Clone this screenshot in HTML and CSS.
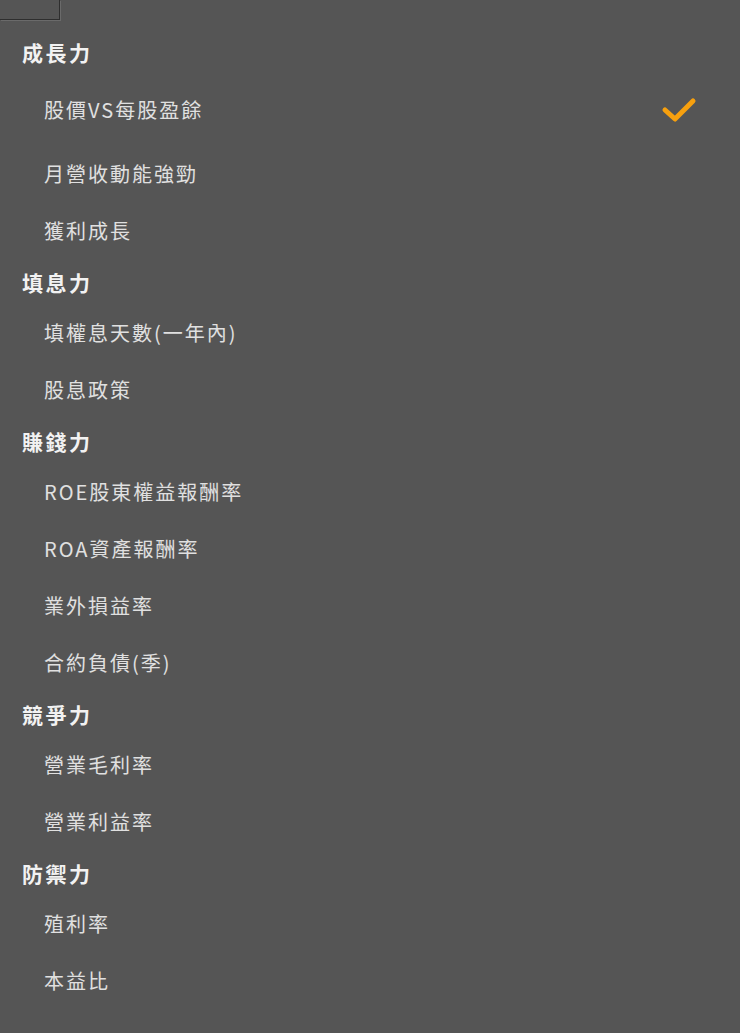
FILE: index.html
```html
<!DOCTYPE html>
<html lang="zh-Hant">
<head>
<meta charset="utf-8">
<title>選股條件</title>
<link rel="stylesheet" href="styles.css">
</head>
<body>
<div class="topbox"></div>
<div class="list">
  <div class="group-title">成長力</div>
  <div class="item item-checked">
    <span class="label">股價VS每股盈餘</span>
    <svg class="check" width="38" height="28" viewBox="0 0 38 28"><polyline points="5,14 15,23 33,5" fill="none" stroke="#f7a00e" stroke-width="5" stroke-linecap="round" stroke-linejoin="round"/></svg>
  </div>
  <div class="item"><span class="label">月營收動能強勁</span></div>
  <div class="item"><span class="label">獲利成長</span></div>

  <div class="group-title">填息力</div>
  <div class="item"><span class="label">填權息天數(一年內)</span></div>
  <div class="item"><span class="label">股息政策</span></div>

  <div class="group-title">賺錢力</div>
  <div class="item"><span class="label">ROE股東權益報酬率</span></div>
  <div class="item"><span class="label">ROA資產報酬率</span></div>
  <div class="item"><span class="label">業外損益率</span></div>
  <div class="item"><span class="label">合約負債(季)</span></div>

  <div class="group-title">競爭力</div>
  <div class="item"><span class="label">營業毛利率</span></div>
  <div class="item"><span class="label">營業利益率</span></div>

  <div class="group-title">防禦力</div>
  <div class="item"><span class="label">殖利率</span></div>
  <div class="item"><span class="label">本益比</span></div>
</div>
</body>
</html>
```

FILE: styles.css
```css
html, body {
  margin: 0;
  padding: 0;
  background: #555555;
  height: 100%;
  overflow: hidden;
}
body {
  font-family: "Noto Sans CJK TC", "Noto Sans", sans-serif;
}
.topbox {
  width: 59px;
  height: 19px;
  border-right: 1px solid #2e2e2e;
  border-bottom: 1px solid #2e2e2e;
  box-shadow: 1px 1px 0 #6a6a6a;
}
.list {
  padding-top: 9px;
}
.group-title {
  height: 45px;
  box-sizing: border-box;
  padding: 2px 0 0 22px;
  line-height: 43px;
  font-size: 21px;
  font-weight: 700;
  letter-spacing: 2.5px;
  color: #f2f2f2;
}
.item {
  height: 57px;
  display: flex;
  align-items: center;
  padding-left: 44px;
  font-size: 20px;
  letter-spacing: 2px;
  color: #e0e0e0;
}
.item-checked {
  height: 71px;
  justify-content: space-between;
  padding-right: 42px;
}
.check {
  display: block;
}
```
